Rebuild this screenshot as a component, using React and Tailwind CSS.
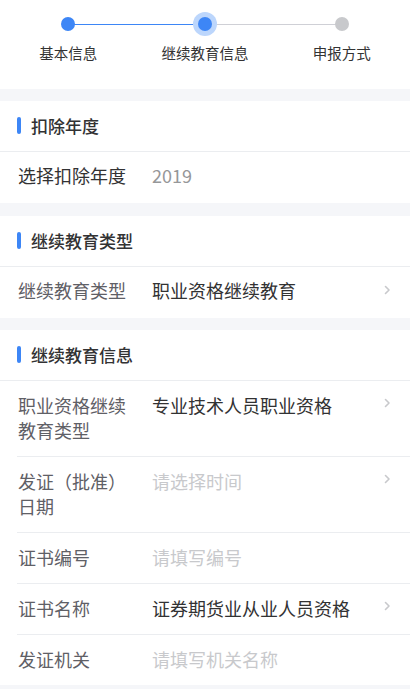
import React from "react";

const font = { fontFamily: '"Noto Sans CJK SC", "Noto Sans", sans-serif' };

const Chevron = () => (
  <svg width="7" height="10" viewBox="0 0 7 10" className="block">
    <polyline points="1.5,1.5 5,5 1.5,8.5" fill="none" stroke="#c8c9cc" strokeWidth="1.6" strokeLinecap="round" strokeLinejoin="round" />
  </svg>
);

const Step = ({ label, state, left, right }) => (
  <div className="relative flex flex-col items-center">
    {left && (
      <div className={`absolute left-0 right-1/2 top-[23.5px] h-[1.5px] ${left === "done" ? "bg-[#3d86f6]" : "bg-[#cfd0d6]"}`} />
    )}
    {right && (
      <div className={`absolute left-1/2 right-0 top-[23.5px] h-[1.5px] ${right === "done" ? "bg-[#3d86f6]" : "bg-[#cfd0d6]"}`} />
    )}
    <div className="relative h-[14px] w-[14px] mt-[17px]">
      {state === "active" && <div className="absolute -inset-[5px] rounded-full bg-[#bcd6fc]" />}
      <div className={`relative h-[14px] w-[14px] rounded-full ${state === "todo" ? "bg-[#c8c9cc]" : "bg-[#3d86f6]"}`} />
    </div>
    <div className="mt-[12px] text-[14.5px] leading-[20px] text-[#333]">{label}</div>
  </div>
);

const SectionTitle = ({ children }) => (
  <div className="flex items-center h-[51px] pb-[1px] px-[17px] border-b border-[#ebedf0]">
    <span className="w-[4px] h-[17px] rounded-full bg-[#3d86f6] mr-[10px]" />
    <span className="text-[17px] font-medium text-[#323233]">{children}</span>
  </div>
);

const Row = ({ label, value, placeholder, arrow, last }) => (
  <div className={`ml-[17px] flex items-start pt-[12px] pb-[13px] pr-[19px] ${last ? "" : "border-b border-[#ebedf0]"}`}>
    <div className="w-[135px] pl-[1px] pr-[24px] text-[18px] leading-[25px] text-[#5f6066]">
      {label}
    </div>
    <div className={`flex-1 text-[18px] leading-[25px] ${value ? "text-[#323233]" : "text-[#c8c9cc]"}`}>
      {value || placeholder}
    </div>
    {arrow && (
      <div className="h-[25px] flex items-center -mt-[3px]">
        <Chevron />
      </div>
    )}
  </div>
);

const Band = ({ tall }) => <div className={`${tall ? "h-[13px]" : "h-[12px]"} bg-[#f5f6f9]`} />;

export default function App() {
  return (
    <div className="w-[410px] h-[689px] overflow-hidden bg-white" style={font}>
      <div className="grid grid-cols-3 pb-[26px]">
        <Step label="基本信息" state="done" right="done" />
        <Step label="继续教育信息" state="active" left="done" right="todo" />
        <Step label="申报方式" state="todo" left="todo" />
      </div>

      <Band />
      <SectionTitle>扣除年度</SectionTitle>
      <div className="flex items-center h-[51px] pb-[4px] px-[18px]">
        <div className="w-[134px] text-[18px] leading-[25px] text-[#323233]">选择扣除年度</div>
        <div className="text-[18px] leading-[25px] text-[#969799]">2019</div>
      </div>

      <Band tall />
      <SectionTitle>继续教育类型</SectionTitle>
      <div className="flex items-center h-[51px] pb-[4px] pl-[18px] pr-[19px]">
        <div className="w-[134px] text-[18px] leading-[25px] text-[#5f6066]">继续教育类型</div>
        <div className="flex-1 text-[18px] leading-[25px] text-[#323233]">职业资格继续教育</div>
        <div className="-mt-[1px]">
          <Chevron />
        </div>
      </div>

      <Band />
      <SectionTitle>继续教育信息</SectionTitle>
      <Row label="职业资格继续教育类型" value="专业技术人员职业资格" arrow />
      <Row label="发证（批准）日期" placeholder="请选择时间" arrow />
      <Row label="证书编号" placeholder="请填写编号" />
      <Row label="证书名称" value="证券期货业从业人员资格" arrow />
      <Row label="发证机关" placeholder="请填写机关名称" last />
      <Band />
    </div>
  );
}
